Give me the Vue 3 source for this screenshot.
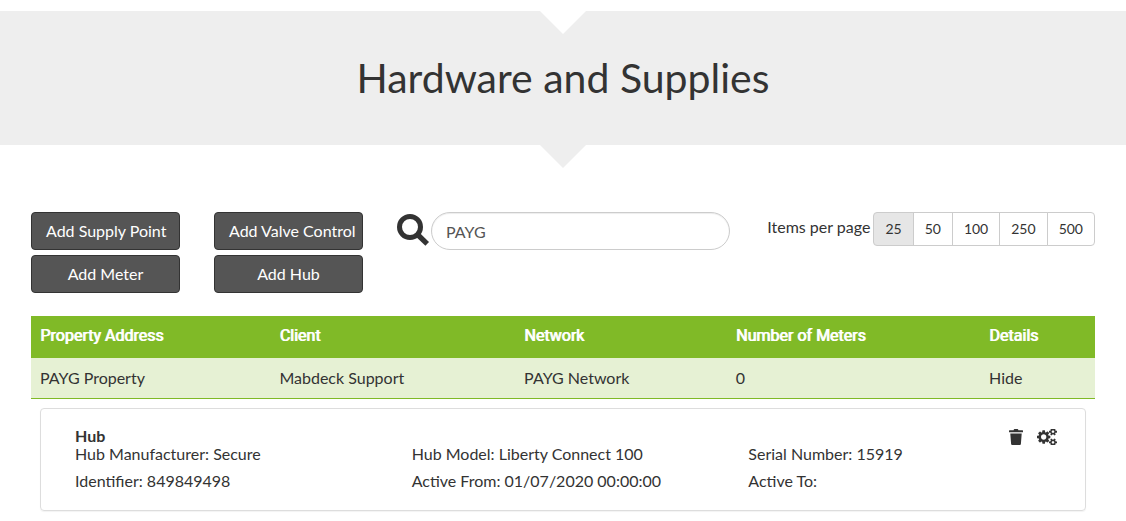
<script setup>
import { ref } from 'vue'

const search = ref('PAYG')
const pageSize = ref(25)
const sizes = [25, 50, 100, 250, 500]
const actions = ['Add Supply Point', 'Add Valve Control', 'Add Meter', 'Add Hub']
const columns = ['Property Address', 'Client', 'Network', 'Number of Meters', 'Details']
const details = [
  ['Hub Manufacturer', 'Secure'],
  ['Hub Model', 'Liberty Connect 100'],
  ['Serial Number', '15919'],
  ['Identifier', '849849498'],
  ['Active From', '01/07/2020 00:00:00'],
  ['Active To', ''],
]
</script>

<template>
  <div class="page">
    <header class="banner">
      <h1>Hardware and Supplies</h1>
    </header>

    <main class="content">
      <div class="toolbar">
        <div class="actions">
          <button v-for="a in actions" :key="a" type="button" class="action">{{ a }}</button>
        </div>

        <div class="search">
          <label for="search" aria-label="Search">
            <svg class="glass" viewBox="0 0 32 32" aria-hidden="true">
              <circle cx="13" cy="13" r="10.5" fill="none" stroke="currentColor" stroke-width="5" />
              <path d="M20.5 20.5L30.2 29.8" fill="none" stroke="currentColor" stroke-width="5.2" />
            </svg>
          </label>
          <input id="search" v-model="search" type="text" />
        </div>

        <div class="paging">
          <span id="per-page">Items per page</span>
          <div class="sizes" role="group" aria-labelledby="per-page">
            <button
              v-for="s in sizes"
              :key="s"
              type="button"
              :class="{ active: s === pageSize }"
              :aria-pressed="s === pageSize"
              @click="pageSize = s"
            >{{ s }}</button>
          </div>
        </div>
      </div>

      <table>
        <colgroup>
          <col class="c-address" />
          <col class="c-client" />
          <col class="c-network" />
          <col class="c-meters" />
          <col class="c-details" />
        </colgroup>
        <thead>
          <tr>
            <th v-for="c in columns" :key="c" scope="col">{{ c }}</th>
          </tr>
        </thead>
        <tbody>
          <tr class="property">
            <td>PAYG Property</td>
            <td>Mabdeck Support</td>
            <td>PAYG Network</td>
            <td>0</td>
            <td><a href="#">Hide</a></td>
          </tr>
          <tr>
            <td class="expanded" colspan="5">
              <section class="card">
                <div class="card-head">
                  <h2>Hub</h2>
                  <div class="tools">
                    <button type="button" aria-label="Delete hub">
                      <svg class="trash" viewBox="0 0 14 16" aria-hidden="true">
                        <path
                          fill="currentColor"
                          d="M.5 1.3H4.6Q4.8 0 5.6 0H8.4Q9.2 0 9.4 1.3H13.5Q14 1.3 14 1.8V3.2H0V1.8Q0 1.3.5 1.3ZM1.3 4.4H12.7L11.9 15Q11.8 16 10.8 16H3.2Q2.2 16 2.1 15Z"
                        />
                      </svg>
                    </button>
                    <button type="button" aria-label="Hub settings">
                      <svg class="cogs" viewBox="0 -128 1920 1536" aria-hidden="true">
                        <path
                          fill="currentColor"
                          fill-rule="evenodd"
                          d="M896 640q0-106-75-181t-181-75-181 75-75 181 75 181 181 75 181-75 75-181zM1280 549v185q0 10-7 19.5t-16 10.5l-155 24q-11 35-32 76 34 48 90 115 7 11 7 20 0 12-7 19-23 30-82.5 89.5t-78.5 59.5q-11 0-21-7l-115-90q-37 19-77 31-11 108-23 155-7 24-30 24h-186q-11 0-20-7.5t-10-17.5l-23-153q-34-10-75-31l-118 89q-7 7-20 7-11 0-21-8-144-133-144-160 0-9 7-19 10-14 41-53t47-61q-23-44-35-82l-152-24q-10-1-17-9.5t-7-19.5v-185q0-10 7-19.5t16-10.5l155-24q11-35 32-76-34-48-90-115-7-11-7-20 0-12 7-20 22-30 82-89t79-59q11 0 21 7l115 90q34-18 77-32 11-108 23-154 7-24 30-24h186q11 0 20 7.5t10 17.5l23 153q34 10 75 31l118-89q8-7 20-7 11 0 21 8 144 133 144 160 0 8-7 19-12 16-42 54t-45 60q23 48 34 82l152 23q10 2 17 10.5t7 19.5z"
                        />
                        <g v-for="dy in [0, -1024]" :key="dy" :transform="`translate(0 ${dy})`">
                          <path
                            fill="currentColor"
                            fill-rule="evenodd"
                            d="M1664 1152q0-52-38-90t-90-38-90 38-38 90q0 53 37.5 90.5t90.5 37.5 90.5-37.5 37.5-90.5zM1920 1082v140q0 16-149 31-12 27-30 52 51 113 51 138 0 4-4 7-122 71-124 71-8 0-46-47t-52-68q-20 2-30 2t-30-2q-14 21-52 68t-46 47q-2 0-124-71-4-3-4-7 0-25 51-138-18-25-30-52-149-15-149-31v-140q0-16 149-31 13-29 30-52-51-113-51-138 0-4 4-7 4-2 35-20t59-34 30-16q8 0 46 46.5t52 67.5q20-2 30-2t30 2q51-71 92-112l6-2q4 0 124 70 4 3 4 7 0 25-51 138 17 23 30 52 149 15 149 31z"
                          />
                        </g>
                      </svg>
                    </button>
                  </div>
                </div>
                <dl>
                  <div v-for="[name, value] in details" :key="name">
                    <dt>{{ name }}:&nbsp;</dt>
                    <dd>{{ value }}</dd>
                  </div>
                </dl>
              </section>
            </td>
          </tr>
        </tbody>
      </table>
    </main>
  </div>
</template>

<style>
body {
  margin: 0;
  background: #fff;
}
</style>

<style scoped>
.page {
  padding-top: 11px;
  color: #333;
  font: 16px/22px Lato, "Liberation Sans", sans-serif;
}
.page * {
  box-sizing: border-box;
}
button,
input {
  font-family: inherit;
}
.banner {
  position: relative;
  padding: 37px 16px;
  background: #eee;
  text-align: center;
}
.banner::before,
.banner::after {
  content: "";
  position: absolute;
  left: 50%;
  border: 23px solid transparent;
  border-bottom-width: 0;
  transform: translateX(-50%);
}
.banner::before {
  top: 0;
  border-top-color: #fff;
}
.banner::after {
  top: 100%;
  border-top-color: #eee;
}
h1 {
  margin: 0;
  font-size: 41px;
  line-height: 60px;
  font-weight: 400;
}
.content {
  padding: 67px 31px 10px;
}
.toolbar {
  display: grid;
  grid-template-columns: auto minmax(160px, 333px) 1fr;
  column-gap: 34px;
  align-items: start;
  margin-bottom: 23px;
}
.actions {
  display: grid;
  grid-template-columns: 149px 149px;
  gap: 5px 34px;
}
.action {
  height: 38px;
  padding: 0 14px 2px;
  border: 1px solid #333;
  border-radius: 4px;
  background: #555;
  color: #fff;
  font-size: 16px;
  white-space: nowrap;
}
.search {
  display: flex;
  gap: 2px;
}
.glass {
  display: block;
  width: 32px;
  height: 32px;
  margin-top: 2px;
}
.search input {
  flex: 1;
  min-width: 0;
  height: 38px;
  padding: 0 14px;
  border: 1px solid #ccc;
  border-radius: 19px;
  box-shadow: inset 0 1px 1px rgba(0, 0, 0, 0.075);
  background: #fff;
  color: #555;
  font-size: 16px;
}
.paging {
  display: flex;
  justify-content: flex-end;
  gap: 3px;
  white-space: nowrap;
}
.paging span {
  line-height: 30px;
}
.sizes {
  display: flex;
}
.sizes button {
  height: 34px;
  margin-left: -1px;
  padding: 0 11px 2px;
  border: 1px solid #ccc;
  background: #fff;
  color: #333;
  font-size: 14px;
}
.sizes button:first-child {
  margin-left: 0;
  border-radius: 4px 0 0 4px;
}
.sizes button:last-child {
  border-radius: 0 4px 4px 0;
}
.sizes .active {
  background: #e6e6e6;
}
table {
  width: 100%;
  border-spacing: 0;
  table-layout: fixed;
}
.c-address {
  width: 22.5%;
}
.c-client {
  width: 23%;
}
.c-network {
  width: 19.9%;
}
.c-meters {
  width: 23.8%;
}
.c-details {
  width: 10.8%;
}
th,
td {
  padding: 9px;
  text-align: left;
}
th {
  padding: 9px 9px 11px;
  background: #80ba27;
  color: #fff;
  font-family: Roboto, "Liberation Sans", sans-serif;
  font-weight: 400;
  text-shadow: 1px 0 0 #fff;
}
.property td {
  border-bottom: 1px solid #80ba27;
  background: #e6f1d4;
}
a {
  color: inherit;
  text-decoration: none;
}
.card {
  padding: 16px 0 13px 34px;
  border: 1px solid #ddd;
  border-radius: 4px;
  box-shadow: 0 1px 1px rgba(0, 0, 0, 0.05);
}
.card-head {
  display: flex;
  align-items: flex-start;
  justify-content: space-between;
  padding-right: 28px;
}
h2 {
  margin: 0;
  font-size: 16px;
  line-height: 21px;
}
.tools {
  display: flex;
  gap: 14px;
  padding-top: 4px;
}
.tools button {
  padding: 0;
  border: 0;
  background: none;
  color: #333;
}
.tools svg {
  display: block;
  height: 16px;
}
.trash {
  width: 14px;
}
.cogs {
  width: 20px;
}
dl {
  display: grid;
  grid-template-columns: repeat(3, 1fr);
  margin: -3px 0 0;
}
dl div {
  display: flex;
  padding-bottom: 5px;
}
dd {
  margin: 0;
}
.expanded {
  padding-bottom: 0;
}
</style>
